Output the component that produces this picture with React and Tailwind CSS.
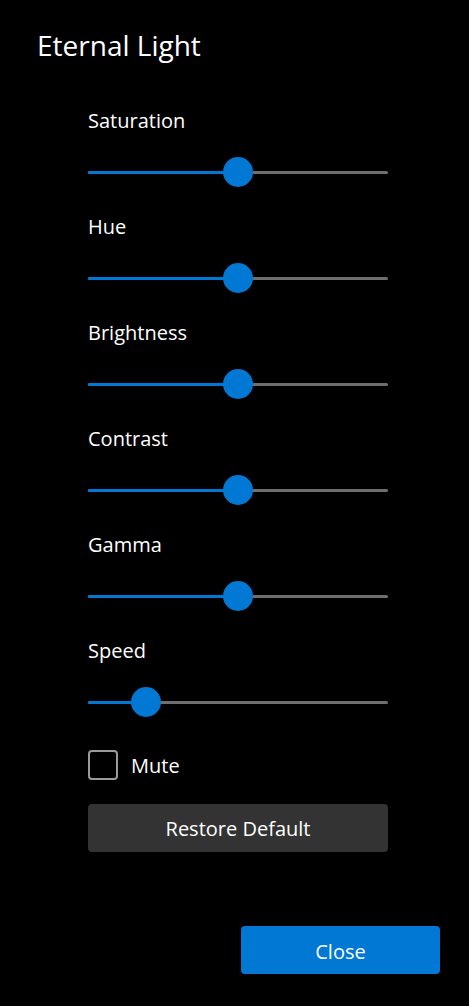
import React from "react";

const sliders = [
  { label: "Saturation", pos: 150 },
  { label: "Hue", pos: 150 },
  { label: "Brightness", pos: 150 },
  { label: "Contrast", pos: 150 },
  { label: "Gamma", pos: 150 },
  { label: "Speed", pos: 58 },
];

function Slider({ label, pos }) {
  return (
    <div className="flex flex-col h-[106px]">
      <div className="h-[28px] leading-[28px] text-[20px] text-white">{label}</div>
      <div className="h-[21px]" />
      <div className="relative h-[32px] w-[300px] flex items-center">
        <div className="h-[3px] w-full rounded-full bg-[#6e6e6e]" />
        <div
          className="absolute left-0 top-[14.5px] h-[3px] rounded-full bg-[#0078d4]"
          style={{ width: pos + "px" }}
        />
        <div
          className="absolute top-[1px] h-[30px] w-[30px] rounded-full bg-[#0078d4]"
          style={{ left: pos - 15 + "px" }}
        />
      </div>
    </div>
  );
}

export default function App() {
  return (
    <div
      className="w-[469px] h-[1006px] bg-black text-white flex flex-col"
      style={{ fontFamily: '"Open Sans", "Noto Sans", sans-serif' }}
    >
      <div className="pt-[25px] pl-[37px] h-[40px] box-content leading-[40px] text-[28px]">
        Eternal Light
      </div>
      <div className="pt-[42px] pl-[88px] flex flex-col">
        {sliders.map((s) => (
          <Slider key={s.label} {...s} />
        ))}
        <div className="mt-[7px] flex items-center h-[30px] gap-[13px]">
          <div className="w-[30px] h-[30px] rounded-[4px] border-2 border-[#9a9a9a]" />
          <span className="text-[20px] leading-[30px] pt-[1px]">Mute</span>
        </div>
        <div className="mt-[24px] w-[300px] h-[48px] pt-[2px] rounded-[4px] bg-[#333333] flex items-center justify-center text-[20px]">
          Restore Default
        </div>
      </div>
      <div className="mt-[74px] flex justify-end pr-[29px]">
        <div className="w-[199px] h-[48px] pt-[3px] rounded-[4px] bg-[#0078d4] flex items-center justify-center text-[20px]">
          Close
        </div>
      </div>
    </div>
  );
}
